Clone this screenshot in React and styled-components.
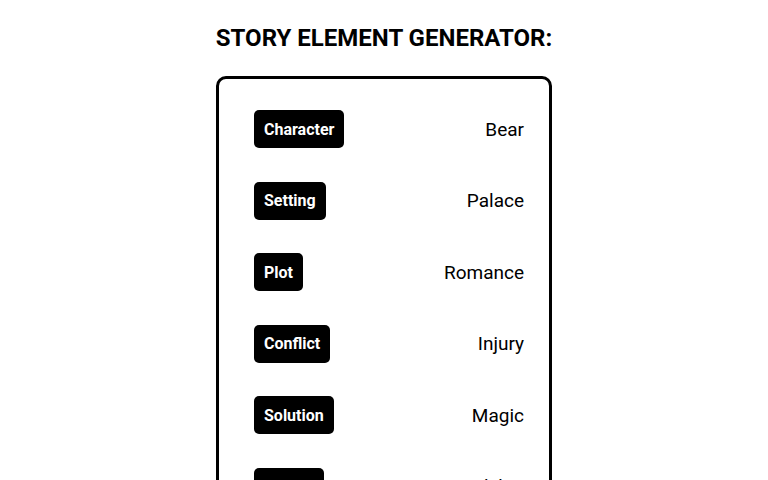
import React from "react";
import styled, { createGlobalStyle } from "styled-components";

const GlobalStyle = createGlobalStyle`
  body {
    margin: 0;
    background: #fff;
    font-family: Roboto, "Liberation Sans", sans-serif;
    color: #000;
  }
`;

const elements = [
  { label: "Character", value: "Bear" },
  { label: "Setting", value: "Palace" },
  { label: "Plot", value: "Romance" },
  { label: "Conflict", value: "Injury" },
  { label: "Solution", value: "Magic" },
  { label: "Theme", value: "Friendship" },
];

export default function App() {
  return (
    <>
      <GlobalStyle />
      <Page>
        <Title>STORY ELEMENT GENERATOR:</Title>
        <Card>
          {elements.map((el) => (
            <Row key={el.label}>
              <Label>{el.label}</Label>
              <Value>{el.value}</Value>
            </Row>
          ))}
        </Card>
      </Page>
    </>
  );
}

const Page = styled.div`
  display: flex;
  flex-direction: column;
  align-items: center;
  padding-top: 24px;
`;

const Title = styled.h1`
  margin: 0 0 24px;
  font-size: 24px;
  font-weight: 700;
  line-height: 28px;
`;

const Card = styled.div`
  box-sizing: border-box;
  width: 336px;
  border: 3px solid #000;
  border-radius: 10px;
  padding: 31px 25px 31px 35px;
  display: flex;
  flex-direction: column;
  gap: 33.5px;
`;

const Row = styled.div`
  display: flex;
  align-items: center;
  justify-content: space-between;
  height: 38px;
`;

const Label = styled.button`
  height: 38px;
  padding: 0 10px;
  border: none;
  border-radius: 5px;
  background: #000;
  color: #fff;
  font-family: Roboto, "Liberation Sans", sans-serif;
  font-size: 16px;
  font-weight: 700;
  cursor: pointer;
`;

const Value = styled.span`
  font-size: 19px;
  font-weight: 400;
`;
